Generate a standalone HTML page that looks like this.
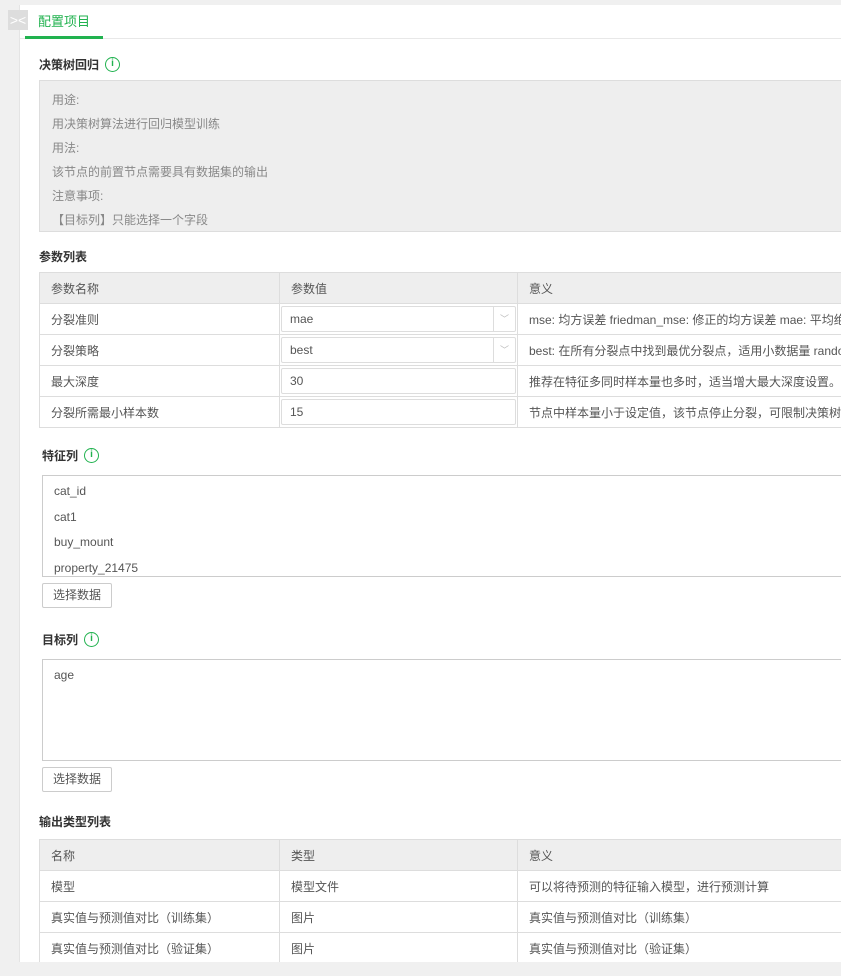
<!DOCTYPE html>
<html><head><meta charset="utf-8"><style>
*{box-sizing:border-box;margin:0;padding:0}
body{width:841px;height:976px;overflow:hidden;background:#f0f0f0;font-family:"Liberation Sans","Noto Sans CJK SC",sans-serif;font-size:12px;color:#555;position:relative}
.panel{position:absolute;left:19px;top:5px;width:830px;height:957px;background:#fff;border-left:1px solid #e4e4e4}
.tabbar{position:absolute;left:0;top:0;right:0;height:34px;border-bottom:1px solid #e8e8e8}
.tab{position:absolute;left:5px;top:0;width:78px;height:34px;border-bottom:3px solid #21b24f;color:#21b24f;font-size:13px;text-align:center;line-height:34px}
.ctl{position:absolute;left:8px;top:10px;width:20px;height:20px;background:#ddd;color:#fff;font-size:14px;text-align:center;line-height:20px}
.abs{position:absolute}
.h{font-size:12px;font-weight:bold;color:#333;line-height:16px}
.info{display:inline-block;width:15px;height:15px;border:1.5px solid #21b24f;border-radius:50%;color:#21b24f;font-size:10px;text-align:center;line-height:12px;font-weight:bold;vertical-align:top;margin-left:6px}
.desc{position:absolute;left:39px;top:80px;width:820px;height:152px;background:#eee;border:1px solid #ddd;color:#888;padding:7px 12px 0;line-height:24px}
table{position:absolute;left:39px;border-collapse:collapse;width:820px;table-layout:fixed}
td{border:1px solid #ddd;height:31px;padding:0 11px;white-space:nowrap;overflow:hidden}
tr.hd td{background:#eee}
td.in{padding:2px 1px}
.inp{height:26px;border:1px solid #ddd;border-radius:2px;line-height:24px;padding-left:8px;position:relative}
.inp .ar{position:absolute;right:0;top:0;width:22px;height:24px;border-left:1px solid #ddd;color:#bbb;text-align:center;font-size:9px}
.box{position:absolute;left:42px;width:810px;border:1px solid #ccc;padding:3px 11px;line-height:25.7px}
.btn{position:absolute;left:42px;width:70px;height:25px;border:1px solid #ccc;border-radius:2px;text-align:center;line-height:23px;background:#fff}
</style></head><body>
<div class="panel">
<div class="tabbar"><div class="tab">配置项目</div></div>
</div>
<div class="ctl">&gt;&lt;</div>
<div class="abs h" style="left:39px;top:57px">决策树回归<span class="info">i</span></div>
<div class="desc">用途:<br>用决策树算法进行回归模型训练<br>用法:<br>该节点的前置节点需要具有数据集的输出<br>注意事项:<br>【目标列】只能选择一个字段</div>
<div class="abs h" style="left:39px;top:249px">参数列表</div>
<table style="top:272px"><col style="width:240px"><col style="width:238px"><col style="width:342px">
<tr class="hd"><td>参数名称</td><td>参数值</td><td>意义</td></tr>
<tr><td>分裂准则</td><td class="in"><div class="inp">mae<span class="ar">﹀</span></div></td><td>mse: 均方误差 friedman_mse: 修正的均方误差 mae: 平均绝对误差</td></tr>
<tr><td>分裂策略</td><td class="in"><div class="inp">best<span class="ar">﹀</span></div></td><td>best: 在所有分裂点中找到最优分裂点，适用小数据量 random</td></tr>
<tr><td>最大深度</td><td class="in"><div class="inp">30</div></td><td>推荐在特征多同时样本量也多时，适当增大最大深度设置。</td></tr>
<tr><td>分裂所需最小样本数</td><td class="in"><div class="inp">15</div></td><td>节点中样本量小于设定值，该节点停止分裂，可限制决策树</td></tr>
</table>
<div class="abs h" style="left:42px;top:448px">特征列<span class="info">i</span></div>
<div class="box" style="top:475px;height:102px;overflow:hidden">cat_id<br>cat1<br>buy_mount<br>property_21475</div>
<div class="btn" style="top:583px">选择数据</div>
<div class="abs h" style="left:42px;top:632px">目标列<span class="info">i</span></div>
<div class="box" style="top:659px;height:102px">age</div>
<div class="btn" style="top:767px">选择数据</div>
<div class="abs h" style="left:39px;top:814px">输出类型列表</div>
<table style="top:839px"><col style="width:240px"><col style="width:238px"><col style="width:342px">
<tr class="hd"><td>名称</td><td>类型</td><td>意义</td></tr>
<tr><td>模型</td><td>模型文件</td><td>可以将待预测的特征输入模型，进行预测计算</td></tr>
<tr><td>真实值与预测值对比（训练集）</td><td>图片</td><td>真实值与预测值对比（训练集）</td></tr>
<tr><td>真实值与预测值对比（验证集）</td><td>图片</td><td>真实值与预测值对比（验证集）</td></tr>
</table>
<div class="abs" style="left:0;top:962px;width:841px;height:14px;background:#f0f0f0"></div>
</body></html>
